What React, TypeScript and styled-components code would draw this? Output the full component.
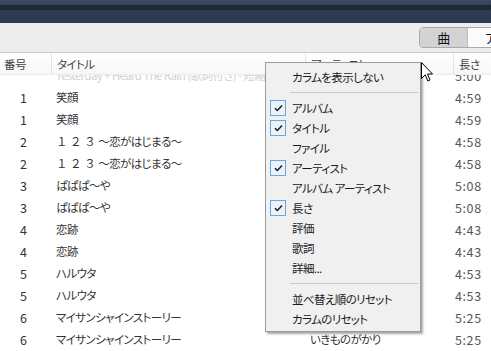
import styled, { createGlobalStyle } from 'styled-components';
import type { ReactNode } from 'react';

const GlobalStyle = createGlobalStyle`
  html, body {
    margin: 0;
    padding: 0;
    overflow: hidden;
    background: #ffffff;
  }
  body {
    font-family: "Noto Sans CJK JP", "Noto Sans", sans-serif;
    font-feature-settings: "palt";
  }
`;

const Window = styled.div`
  position: relative;
  width: 491px;
  height: 351px;
  overflow: hidden;
  display: flex;
  flex-direction: column;
  background: #ffffff;
  font-size: 11.5px;
  letter-spacing: -0.6px;
  color: #333333;
`;

const TitleBar = styled.div`
  flex: 0 0 23px;
  background: linear-gradient(
    to bottom,
    #3a4b62 0px,
    #34445a 5px,
    #1d2736 5px,
    #1f2a39 10px,
    #2e3d53 10px,
    #2c3b50 23px
  );
`;

const Toolbar = styled.div`
  flex: 0 0 29px;
  display: flex;
  align-items: center;
  justify-content: flex-end;
  background: #ededed;
  border-bottom: 1px solid #cbcbcb;
`;

const Segmented = styled.div`
  display: flex;
  height: 19px;
  width: 100px;
  margin-right: -30px;
  border: 1px solid #a9a9a9;
  border-radius: 4px;
  overflow: hidden;
  background: #fafafa;
`;

const Segment = styled.div<{ $active?: boolean }>`
  flex: ${({ $active }) => ($active ? '0 0 47px' : '1')};
  display: flex;
  align-items: center;
  justify-content: ${({ $active }) => ($active ? 'center' : 'flex-start')};
  padding-left: ${({ $active }) => ($active ? '0' : '17px')};
  background: ${({ $active }) => ($active ? '#d3d3d3' : '#fbfbfb')};
  border-right: ${({ $active }) => ($active ? '1px solid #bdbdbd' : 'none')};
  color: #111;
  font-size: 13px;
  line-height: 19px;
`;

const columns = '51px 254px 148px 1fr';

const HeaderRow = styled.div`
  flex: 0 0 21px;
  display: grid;
  grid-template-columns: ${columns};
  background: linear-gradient(to bottom, #ffffff, #f7f7f7);
  border-bottom: 1px solid #ececec;
  position: relative;
  z-index: 1;
`;

const HeaderCell = styled.div<{ $first?: boolean }>`
  display: flex;
  align-items: center;
  padding-left: ${({ $first }) => ($first ? '4px' : '5px')};
  border-left: ${({ $first }) => ($first ? 'none' : '1px solid #e3e3e3')};
  color: #444;
  white-space: nowrap;
  overflow: hidden;
`;

const Body = styled.div`
  flex: 1;
  overflow: hidden;
`;

const List = styled.div`
  margin-top: -11px;
`;

const Row = styled.div<{ $faded?: boolean }>`
  height: 22px;
  display: grid;
  grid-template-columns: ${columns};
  align-items: center;
  color: ${({ $faded }) => ($faded ? '#cfcfcf' : '#333333')};
  white-space: nowrap;
`;

const NumCell = styled.div`
  text-align: right;
  padding-right: 24px;
  font-size: 12.5px;
  letter-spacing: 0;
`;

const TextCell = styled.div`
  padding-left: 5px;
  overflow: hidden;
`;

const WideDigits = styled.span`
  font-feature-settings: normal;
  letter-spacing: 0;
`;

const TimeCell = styled.div`
  padding-left: 2px;
  color: #555;
  font-size: 12.5px;
  letter-spacing: 0.6px;
`;

const Menu = styled.div`
  position: absolute;
  left: 265px;
  top: 62px;
  width: 154px;
  padding: 4px 0 2px;
  background: #f0f0f0;
  border: 1px solid #9a9a9a;
  box-shadow: 2px 2px 2px rgba(0, 0, 0, 0.35);
  z-index: 5;
`;

const MenuItem = styled.div`
  position: relative;
  height: 20px;
  display: flex;
  align-items: center;
  padding-left: 26px;
  color: #1a1a1a;
  white-space: nowrap;
`;

const CheckBox = styled.div`
  position: absolute;
  left: 4px;
  top: 2px;
  width: 14px;
  height: 14px;
  border: 1px solid #6fa6d6;
  background: #eaf3fb;
  display: flex;
  align-items: center;
  justify-content: center;
`;

const Separator = styled.div`
  height: 11px;
  display: flex;
  align-items: center;
  padding-left: 24px;
  padding-right: 2px;

  &::after {
    content: '';
    flex: 1;
    height: 1px;
    background: #c9c9c9;
  }
`;

const Cursor = styled.svg`
  position: absolute;
  left: 421px;
  top: 62px;
  z-index: 10;
`;

const koi = (
  <>
    <WideDigits>１ ２ ３ </WideDigits>～恋がはじまる～
  </>
);

const rows: { no: string; title: ReactNode; time: string; faded?: boolean }[] = [
  { no: '', title: 'Yesterday + Heard The Rain  (歌詞付き) - 短縮版', time: '5:00', faded: true },
  { no: '1', title: '笑顔', time: '4:59' },
  { no: '1', title: '笑顔', time: '4:59' },
  { no: '2', title: koi, time: '4:58' },
  { no: '2', title: koi, time: '4:58' },
  { no: '3', title: 'ぱぱぱ～や', time: '5:08' },
  { no: '3', title: 'ぱぱぱ～や', time: '5:08' },
  { no: '4', title: '恋跡', time: '4:43' },
  { no: '4', title: '恋跡', time: '4:43' },
  { no: '5', title: 'ハルウタ', time: '4:53' },
  { no: '5', title: 'ハルウタ', time: '4:53' },
  { no: '6', title: 'マイサンシャインストーリー', time: '5:25' },
  { no: '6', title: 'マイサンシャインストーリー', time: '5:25' },
];

type Item = { label: string; checked?: boolean } | 'sep';

const menuItems: Item[] = [
  { label: 'カラムを表示しない' },
  'sep',
  { label: 'アルバム', checked: true },
  { label: 'タイトル', checked: true },
  { label: 'ファイル' },
  { label: 'アーティスト', checked: true },
  { label: 'アルバム アーティスト' },
  { label: '長さ', checked: true },
  { label: '評価' },
  { label: '歌詞' },
  { label: '詳細...' },
  'sep',
  { label: '並べ替え順のリセット' },
  { label: 'カラムのリセット' },
];

const Check = () => (
  <svg width="9" height="8" viewBox="0 0 9 8">
    <path d="M1 4.2 L3.4 6.5 L8 1.5" fill="none" stroke="#1b1b1b" strokeWidth="1.5" />
  </svg>
);

export default function App() {
  return (
    <Window>
      <GlobalStyle />
      <TitleBar />
      <Toolbar>
        <Segmented>
          <Segment $active>曲</Segment>
          <Segment>ア</Segment>
        </Segmented>
      </Toolbar>
      <HeaderRow>
        <HeaderCell $first>番号</HeaderCell>
        <HeaderCell>タイトル</HeaderCell>
        <HeaderCell>アーティスト</HeaderCell>
        <HeaderCell>長さ</HeaderCell>
      </HeaderRow>
      <Body>
        <List>
          {rows.map((r, i) => (
            <Row key={i} $faded={r.faded}>
              <NumCell>{r.no}</NumCell>
              <TextCell>{r.title}</TextCell>
              <TextCell>いきものがかり</TextCell>
              <TimeCell>{r.time}</TimeCell>
            </Row>
          ))}
        </List>
      </Body>

      <Menu>
        {menuItems.map((item, i) =>
          item === 'sep' ? (
            <Separator key={i} />
          ) : (
            <MenuItem key={i}>
              {item.checked && (
                <CheckBox>
                  <Check />
                </CheckBox>
              )}
              {item.label}
            </MenuItem>
          )
        )}
      </Menu>

      <Cursor width="13" height="21" viewBox="0 0 13 21">
        <path
          d="M0.5 0.5 L0.5 16.5 L4.2 12.8 L6.8 19 L9 18 L6.5 12 L11.5 12 Z"
          fill="#ffffff"
          stroke="#000000"
          strokeWidth="1"
          strokeLinejoin="miter"
        />
      </Cursor>
    </Window>
  );
}
